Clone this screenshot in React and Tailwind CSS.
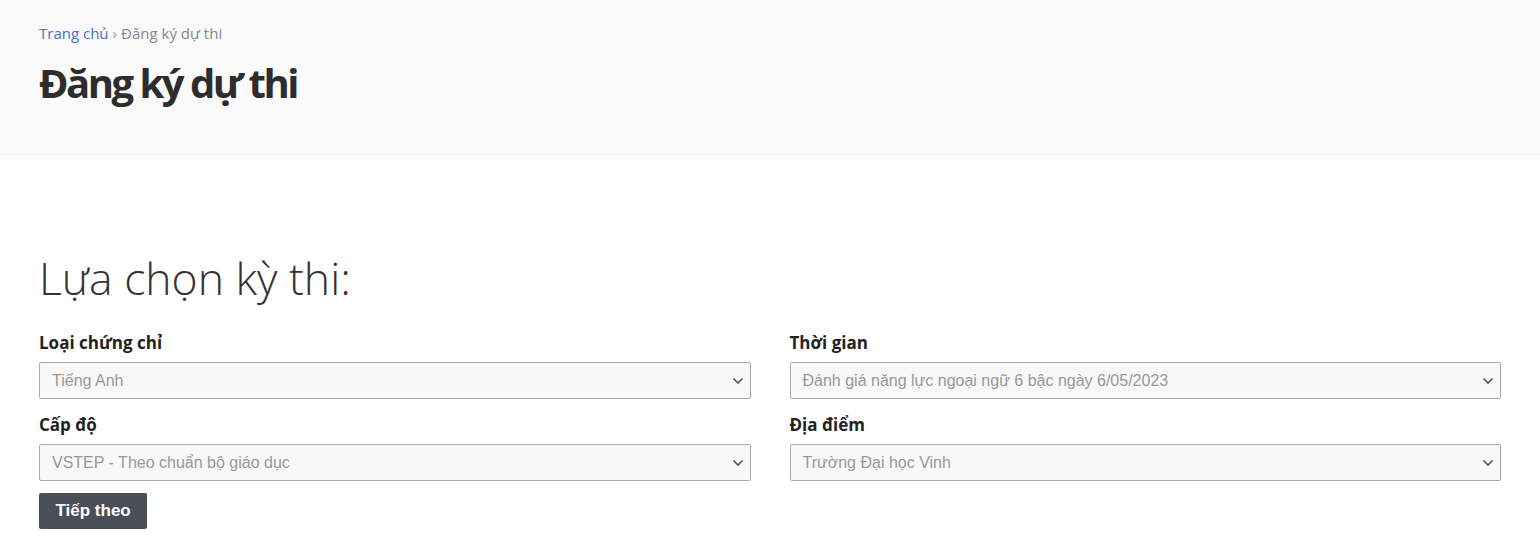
const fields = [
  [
    { label: 'Loại chứng chỉ', value: 'Tiếng Anh' },
    { label: 'Thời gian', value: 'Đánh giá năng lực ngoại ngữ 6 bậc ngày 6/05/2023' },
  ],
  [
    { label: 'Cấp độ', value: 'VSTEP - Theo chuẩn bộ giáo dục' },
    { label: 'Địa điểm', value: 'Trường Đại học Vinh' },
  ],
];

function Chevron() {
  return (
    <svg viewBox="0 0 12 8" className="absolute right-[6px] top-1/2 h-[8px] w-[12px] -translate-y-1/2 text-[#555]" fill="none">
      <path d="M1.5 1.5 6 6l4.5-4.5" stroke="currentColor" strokeWidth="1.6" />
    </svg>
  );
}

function SelectBox({ value }) {
  return (
    <div className="relative h-[37px] rounded-[2px] border border-[#a9a9a9] bg-[#f8f8f8]">
      <div className="flex h-full items-center pl-[12px] font-['Liberation_Sans',Arial,sans-serif] text-[16px] text-[#999]">
        {value}
      </div>
      <Chevron />
    </div>
  );
}

export default function App() {
  return (
    <div className="min-h-[552px] bg-white font-['Open_Sans',sans-serif] text-[#333]">
      <div className="h-[155px] border-b border-[#eeeeee] bg-[#fafafa] px-[39px] pt-[22px]">
        <div className="flex items-center text-[15px] leading-[22px]">
          <a className="text-[#4c6fc7]">Trang chủ</a>
          <span className="mx-[4px] text-[#999]">›</span>
          <span className="text-[#888]">Đăng ký dự thi</span>
        </div>
        <h1 className="mt-[14px] text-[40px] font-bold leading-[50px] tracking-[-2.5px] text-[#2d2d2d]">
          Đăng ký dự thi
        </h1>
      </div>

      <div className="px-[39px] pt-[93px]">
        <h2 className="text-[44.5px] font-light leading-[60px] text-[#333]">Lựa chọn kỳ thi:</h2>
        <div className="mt-[23px] flex flex-col gap-[14px]">
          {fields.map((row, i) => (
            <div key={i} className="grid grid-cols-2 gap-[39px]">
              {row.map((f) => (
                <div key={f.label}>
                  <label className="block text-[17px] font-bold leading-[23px] text-[#222]">{f.label}</label>
                  <div className="mt-[8px]">
                    <SelectBox value={f.value} />
                  </div>
                </div>
              ))}
            </div>
          ))}
        </div>
        <button className="mt-[12px] h-[36px] rounded-[2px] bg-[#4a4e55] px-[16.5px] font-['Liberation_Sans',Arial,sans-serif] text-[17px] font-bold text-white">
          Tiếp theo
        </button>
      </div>
    </div>
  );
}
